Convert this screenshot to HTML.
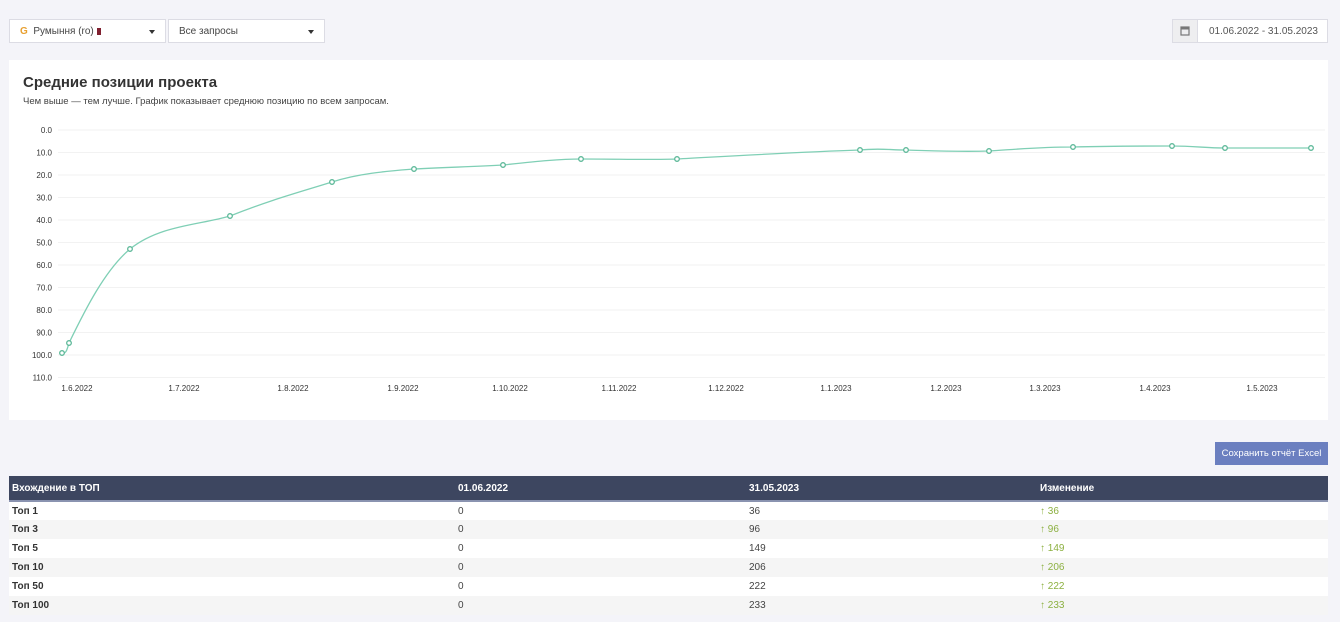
<!DOCTYPE html>
<html><head><meta charset="utf-8"><style>
*{box-sizing:border-box;margin:0;padding:0}
body{width:1340px;height:622px;background:#f4f4f9;font-family:"Liberation Sans","DejaVu Sans",sans-serif;position:relative;overflow:hidden;color:#333}
.sel{position:absolute;top:19px;height:24px;background:#fff;border:1px solid #dcdce4;font-size:10px;line-height:22px;padding-top:1px;padding-left:10px;color:#444}
.car{position:absolute;right:10px;top:10px;width:0;height:0;border-left:3px solid transparent;border-right:3px solid transparent;border-top:4px solid #333}
.panel{position:absolute;left:9px;top:60px;width:1319px;height:360px;background:#fff}
h1{position:absolute;left:23px;top:74px;font-size:15px;font-weight:bold;color:#333}
.sub{position:absolute;left:23px;top:96px;font-size:9.5px;color:#444}
.btn{position:absolute;left:1215px;top:442px;width:113px;height:23px;background:#6b7fc0;color:#fff;font-size:9.5px;line-height:23px;text-align:center}
table{position:absolute;left:9px;top:476px;width:1319px;border-collapse:collapse;font-size:10px}
th{background:#3d4660;color:#fff;text-align:left;height:25px;padding-left:3px;font-weight:bold;border-bottom:2px solid #8a93b0}
td{height:19px;padding-left:3px;color:#444}
td:first-child{color:#333;font-weight:bold}
tr:nth-child(odd) td{background:#f5f5f5}
tr:nth-child(even) td{background:#fff}
.up{color:#8cb040}
.up b{font-weight:bold}
</style></head><body>
<div class="sel" style="left:9px;width:157px"><span style="color:#e8a030;font-weight:bold">G</span>&nbsp; Румыння (ro) <span style="display:inline-block;width:4px;height:7px;background:#802030;vertical-align:-1px"></span><div class="car"></div></div>
<div class="sel" style="left:168px;width:157px">Все запросы<div class="car"></div></div>
<div style="position:absolute;left:1172px;top:19px;width:26px;height:24px;background:#eeeef0;border:1px solid #dcdce4"><svg width="24" height="22" viewBox="0 0 24 22"><rect x="8" y="7" width="8" height="8" fill="none" stroke="#777" stroke-width="1.2"/><rect x="8" y="7" width="8" height="2.5" fill="#777"/></svg></div>
<div class="sel" style="left:1197px;width:131px;padding-left:11px;color:#555">01.06.2022 - 31.05.2023</div>
<div class="panel"></div>
<h1>Средние позиции проекта</h1>
<div class="sub">Чем выше — тем лучше. График показывает среднюю позицию по всем запросам.</div>
<svg style="position:absolute;left:0;top:0" width="1340" height="420" font-family="Liberation Sans,sans-serif" font-size="8" fill="#333">
<g stroke="#f2f2f2" stroke-width="1">
<line x1="58" x2="1325" y1="130" y2="130"/><line x1="58" x2="1325" y1="152.5" y2="152.5"/><line x1="58" x2="1325" y1="175" y2="175"/><line x1="58" x2="1325" y1="197.5" y2="197.5"/><line x1="58" x2="1325" y1="220" y2="220"/><line x1="58" x2="1325" y1="242.5" y2="242.5"/><line x1="58" x2="1325" y1="265" y2="265"/><line x1="58" x2="1325" y1="287.5" y2="287.5"/><line x1="58" x2="1325" y1="310" y2="310"/><line x1="58" x2="1325" y1="332.5" y2="332.5"/><line x1="58" x2="1325" y1="355" y2="355"/><line x1="58" x2="1325" y1="377.5" y2="377.5"/>
</g>
<g text-anchor="end">
<text x="52" y="133">0.0</text><text x="52" y="155.5">10.0</text><text x="52" y="178">20.0</text><text x="52" y="200.5">30.0</text><text x="52" y="223">40.0</text><text x="52" y="245.5">50.0</text><text x="52" y="268">60.0</text><text x="52" y="290.5">70.0</text><text x="52" y="313">80.0</text><text x="52" y="335.5">90.0</text><text x="52" y="358">100.0</text><text x="52" y="380.5">110.0</text>
</g>
<g text-anchor="middle">
<text x="77" y="391">1.6.2022</text><text x="184" y="391">1.7.2022</text><text x="293" y="391">1.8.2022</text><text x="403" y="391">1.9.2022</text><text x="510" y="391">1.10.2022</text><text x="619" y="391">1.11.2022</text><text x="726" y="391">1.12.2022</text><text x="836" y="391">1.1.2023</text><text x="946" y="391">1.2.2023</text><text x="1045" y="391">1.3.2023</text><text x="1155" y="391">1.4.2023</text><text x="1262" y="391">1.5.2023</text>
</g>
<path d="M62,353 C66,354 67,350 69,343 C85,310 105,270 130,249 C160,225 200,225 230,216 C270,200 300,192 332,182 C360,173 390,171 414,169 C450,167 470,167 503,165 C540,161 560,159 581,159 C620,159 650,160 677,159 C750,155 800,152 860,150 C880,148 890,150 906,150 C940,151 960,152 989,151 C1020,149 1040,147 1073,147 C1110,146 1140,146 1172,146 C1195,146 1205,148 1225,148 C1260,148 1290,148 1311,148" fill="none" stroke="#7fcfb5" stroke-width="1.3"/>
<g fill="#fff" stroke="#5cb898" stroke-width="1.3">
<circle cx="62" cy="353" r="2.3"/><circle cx="69" cy="343" r="2.3"/><circle cx="130" cy="249" r="2.3"/><circle cx="230" cy="216" r="2.3"/><circle cx="332" cy="182" r="2.3"/><circle cx="414" cy="169" r="2.3"/><circle cx="503" cy="165" r="2.3"/><circle cx="581" cy="159" r="2.3"/><circle cx="677" cy="159" r="2.3"/><circle cx="860" cy="150" r="2.3"/><circle cx="906" cy="150" r="2.3"/><circle cx="989" cy="151" r="2.3"/><circle cx="1073" cy="147" r="2.3"/><circle cx="1172" cy="146" r="2.3"/><circle cx="1225" cy="148" r="2.3"/><circle cx="1311" cy="148" r="2.3"/>
</g>
</svg>
<div class="btn">Сохранить отчёт Excel</div>
<table>
<tr><th style="width:446px">Вхождение в ТОП</th><th style="width:291px">01.06.2022</th><th style="width:291px">31.05.2023</th><th>Изменение</th></tr>
<tr><td>Топ 1</td><td>0</td><td>36</td><td class="up"><b>↑</b> 36</td></tr>
<tr><td>Топ 3</td><td>0</td><td>96</td><td class="up"><b>↑</b> 96</td></tr>
<tr><td>Топ 5</td><td>0</td><td>149</td><td class="up"><b>↑</b> 149</td></tr>
<tr><td>Топ 10</td><td>0</td><td>206</td><td class="up"><b>↑</b> 206</td></tr>
<tr><td>Топ 50</td><td>0</td><td>222</td><td class="up"><b>↑</b> 222</td></tr>
<tr><td>Топ 100</td><td>0</td><td>233</td><td class="up"><b>↑</b> 233</td></tr>
</table>
</body></html>
